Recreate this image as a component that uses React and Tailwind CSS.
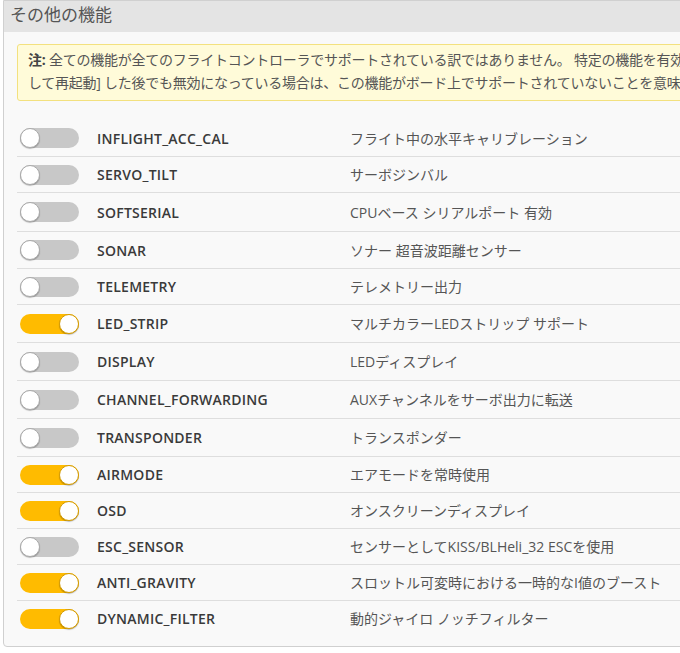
import React from 'react';

const features = [
  { name: 'INFLIGHT_ACC_CAL', desc: 'フライト中の水平キャリブレーション', on: false, h: 'h-[36px]' },
  { name: 'SERVO_TILT', desc: 'サーボジンバル', on: false, h: 'h-[36px]' },
  { name: 'SOFTSERIAL', desc: 'CPUベース シリアルポート 有効', on: false, h: 'h-[39px]' },
  { name: 'SONAR', desc: 'ソナー 超音波距離センサー', on: false, h: 'h-[37px]' },
  { name: 'TELEMETRY', desc: 'テレメトリー出力', on: false, h: 'h-[36px]' },
  { name: 'LED_STRIP', desc: 'マルチカラーLEDストリップ サポート', on: true, h: 'h-[38px]' },
  { name: 'DISPLAY', desc: 'LEDディスプレイ', on: false, h: 'h-[38px]' },
  { name: 'CHANNEL_FORWARDING', desc: 'AUXチャンネルをサーボ出力に転送', on: false, h: 'h-[38px]' },
  { name: 'TRANSPONDER', desc: 'トランスポンダー', on: false, h: 'h-[38px]' },
  { name: 'AIRMODE', desc: 'エアモードを常時使用', on: true, h: 'h-[36px]' },
  { name: 'OSD', desc: 'オンスクリーンディスプレイ', on: true, h: 'h-[36px]' },
  { name: 'ESC_SENSOR', desc: 'センサーとしてKISS/BLHeli_32 ESCを使用', on: false, h: 'h-[36px]' },
  { name: 'ANTI_GRAVITY', desc: 'スロットル可変時における一時的なI値のブースト', on: true, h: 'h-[36px]' },
  { name: 'DYNAMIC_FILTER', desc: '動的ジャイロ ノッチフィルター', on: true, h: 'h-[36px]' },
];

const Toggle = ({ on }) => (
  <div
    className={`relative w-[59px] h-[20px] rounded-full ${on ? 'bg-[#ffbb00]' : 'bg-[#c8c8c8]'}`}
  >
    <div
      className={`absolute top-0 w-[20px] h-[20px] rounded-full bg-white border ${
        on ? 'right-0 border-[#d49b00]' : 'left-0 border-[#a9a9a9]'
      } shadow-[0_1px_1px_rgba(0,0,0,0.25)]`}
    />
  </div>
);

const App = () => {
  return (
    <div
      className="w-[680px] h-[653px] overflow-hidden bg-white"
      style={{ fontFamily: '"Open Sans", "Noto Sans CJK JP", sans-serif' }}
    >
      <div className="ml-[3px] w-[740px] border border-[#d0d0d0] rounded-b-[4px] bg-[#f9f9f9]">
        <div className="h-[31px] bg-[#e4e4e4] flex items-center pl-[6px] pb-[3px] text-[17px] text-[#555]">
          その他の機能
        </div>

        <div className="pl-[13px] pt-[12px] pb-[9px]">
          <div className="h-[57px] border border-[#f3e17f] bg-[#fffbd9] rounded-[3px] pl-[10px] pt-[3px] text-[14px] leading-[23px] text-[#555] whitespace-nowrap tracking-[-0.25px]">
            <strong className="font-bold text-[#444]">注:</strong> 全ての機能が全てのフライトコントローラでサポートされている訳ではありません。 特定の機能を有効にして [保存
            <br />
            して再起動] した後でも無効になっている場合は、この機能がボード上でサポートされていないことを意味します。
          </div>

          <div className="mt-[19px] pb-[1px]">
            {features.map((f, i) => (
              <div
                key={f.name}
                className={`flex items-center ${f.h} ${i > 0 ? 'border-t border-[#dedede]' : ''}`}
              >
                <div className="w-[80px] pl-[3px]">
                  <Toggle on={f.on} />
                </div>
                <div className="w-[253px] text-[14px] font-semibold text-[#3a3a3a] tracking-[0.25px]">
                  {f.name}
                </div>
                <div className="text-[14px] text-[#555]">{f.desc}</div>
              </div>
            ))}
          </div>
        </div>
      </div>
    </div>
  );
};

export default App;
